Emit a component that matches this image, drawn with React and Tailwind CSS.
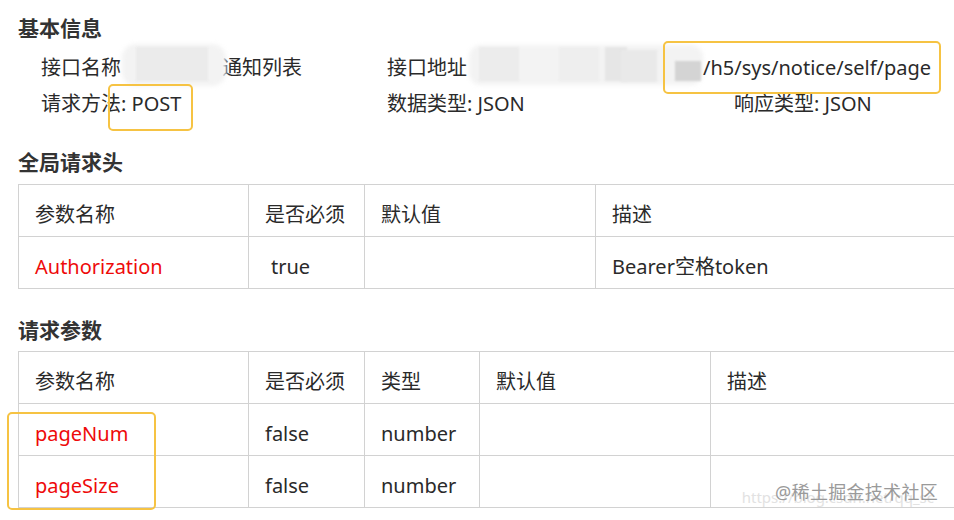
import React from "react";

const font = { fontFamily: '"Noto Sans", "Noto Sans CJK SC", sans-serif' };

function Cell({ w, children, red, extra = "" }) {
  return (
    <div
      className={`h-[51px] flex items-center pt-[9px] pl-[16px] border-l border-[#d2d2d2] shrink-0 ${w} ${red ? "text-[#ee0a0a]" : "text-[#2a2a2a]"} ${extra}`}
    >
      {children}
    </div>
  );
}

function Row({ cells, widths, last }) {
  return (
    <div className={`flex border-t border-[#d2d2d2] ${last ? "border-b" : ""}`}>
      {cells.map((c, i) => (
        <Cell key={i} w={widths[i]} red={c.red} extra={c.extra}>
          {c.t}
        </Cell>
      ))}
    </div>
  );
}

function Heading({ children, extra = "" }) {
  return <div className={`font-bold text-[21px] leading-[32px] text-[#333] ${extra}`}>{children}</div>;
}

export default function App() {
  const w1 = ["w-[230px]", "w-[116px]", "w-[231px]", "w-[370px]"];
  const w2 = ["w-[230px]", "w-[116px]", "w-[115px]", "w-[231px]", "w-[260px]"];
  return (
    <div className="relative w-[954px] h-[520px] overflow-hidden bg-white text-[20px] text-[#2a2a2a]" style={font}>
      <div className="pl-[18px] pt-[12px]">
        <Heading>基本信息</Heading>
        <div className="grid grid-cols-[346px_347px_1fr] pl-[23px] mt-[6px]">
          <div className="h-[36px] flex items-center">
            <span>接口名称</span>
            <span className="relative inline-block w-[101px] h-[36px]">
              <span className="absolute left-[1px] top-[-6px] w-[104px] h-[42px] rounded-[14px] bg-[#f3f3f3] blur-[2px]" />
              <span className="absolute left-[15px] top-[-3px] w-[72px] h-[34px] bg-[#ebebeb] blur-[1px]" />
            </span>
            <span>通知列表</span>
          </div>
          <div className="col-span-2 h-[36px] flex items-center">
            <span>接口地址</span>
            <span className="relative inline-block w-[236px] h-[36px]">
              <span className="absolute left-[2px] top-[-5px] w-[234px] h-[40px] rounded-[12px] bg-[#f3f3f3] blur-[2px]" />
              <span className="absolute left-[12px] top-[-3px] w-[40px] h-[34px] bg-[#ececec] blur-[1px]" />
              <span className="absolute left-[92px] top-[-3px] w-[40px] h-[34px] bg-[#eeeeee] blur-[1px]" />
              <span className="absolute left-[138px] top-[-3px] w-[22px] h-[34px] bg-[#e6e6e6] blur-[1px]" />
              <span className="absolute left-[154px] top-[0px] w-[36px] h-[32px] bg-[#e9e9e9] blur-[1px]" />
              <span className="absolute left-[208px] top-[11px] w-[26px] h-[20px] bg-[#d4d4d4] blur-[1px]" />
            </span>
            <span className="relative">
              /h5/sys/notice/self/page
              <span className="absolute left-[-40px] right-[-10px] top-[-12px] bottom-[-11px] border-2 border-[#f6c343] rounded-[5px]" />
            </span>
          </div>
          <div className="h-[36px] flex items-center">
            请求方法:&nbsp;
            <span className="relative">
              POST
              <span className="absolute left-[-24px] right-[-12px] top-[-5px] bottom-[-12px] border-2 border-[#f6c343] rounded-[5px]" />
            </span>
          </div>
          <div className="h-[36px] flex items-center">数据类型: JSON</div>
          <div className="h-[36px] flex items-center">响应类型: JSON</div>
        </div>

        <Heading extra="mt-[24px]">全局请求头</Heading>
        <div className="mt-[6px] w-[960px]">
          <Row widths={w1} cells={[{ t: "参数名称" }, { t: "是否必须" }, { t: "默认值" }, { t: "描述" }]} />
          <Row
            widths={w1}
            last
            cells={[{ t: "Authorization", red: true }, { t: "true", extra: "pl-[22px]" }, { t: "" }, { t: "Bearer空格token" }]}
          />
        </div>

        <Heading extra="mt-[25px]">请求参数</Heading>
        <div className="mt-[5px] w-[960px]">
          <Row widths={w2} cells={[{ t: "参数名称" }, { t: "是否必须" }, { t: "类型" }, { t: "默认值" }, { t: "描述" }]} />
          <div className="relative">
            <Row widths={w2} cells={[{ t: "pageNum", red: true }, { t: "false" }, { t: "number" }, { t: "" }, { t: "" }]} />
            <Row widths={w2} last cells={[{ t: "pageSize", red: true }, { t: "false" }, { t: "number" }, { t: "" }, { t: "" }]} />
            <span className="absolute left-[-11px] top-[9px] w-[149px] h-[98px] border-2 border-[#f6c343] rounded-[5px]" />
          </div>
        </div>
      </div>

      {/* watermark */}
      <div className="absolute right-[20px] bottom-[14px] text-[15px] leading-[18px] text-[#e2e2e2] whitespace-nowrap">
        https://blog.csdn.net/qq_sc
      </div>
      <div className="absolute right-[16px] bottom-[16px] text-[18px] leading-[24px] text-[#9a9a9a] whitespace-nowrap tracking-[0.3px]">
        @稀土掘金技术社区
      </div>
    </div>
  );
}
